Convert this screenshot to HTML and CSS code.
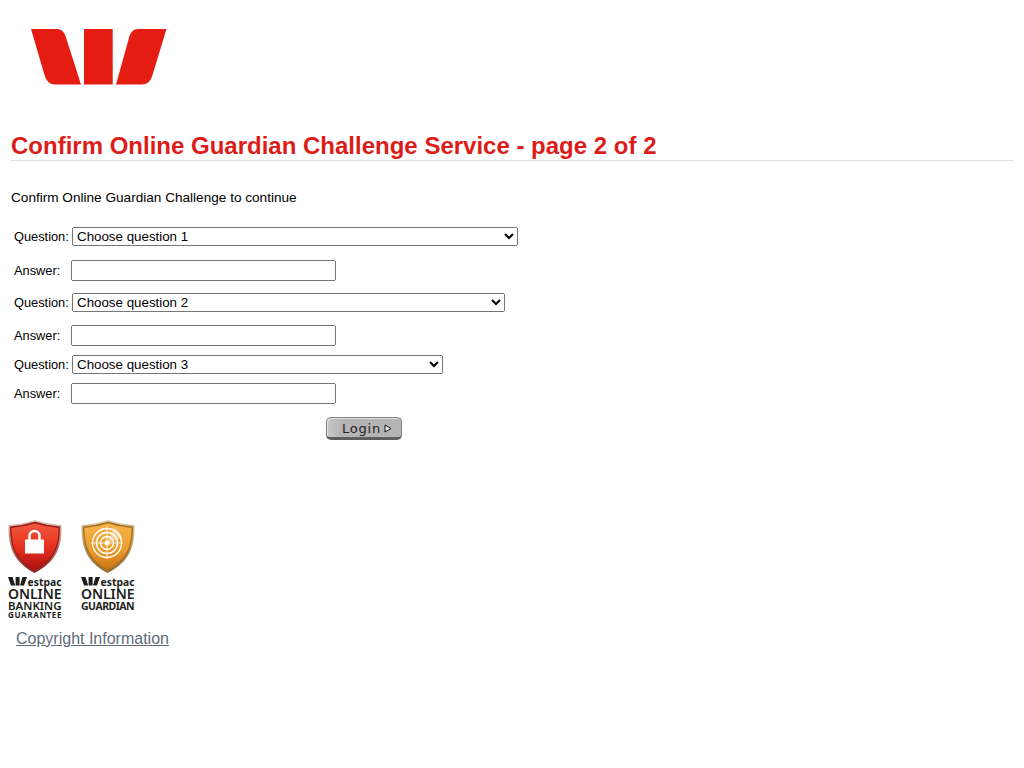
FILE: index.html
```html
<!DOCTYPE html>
<html lang="en">
<head>
    <meta charset="UTF-8">
    <meta name="viewport" content="width=device-width, initial-scale=1.0">
    <title>Confirm Online Guardian Challenge</title>
    <link rel="stylesheet" href="styles.css">
</head>
<body>

    <div class="logo">
        <svg width="140" height="60" viewBox="0 0 140 60">
            <path fill="#e41c12" d="M1 1H27Q33 1 35.500 8L51 56.500H25Q17 56.500 14.500 47Z"/>
            <rect fill="#e41c12" x="54" y="1" width="28.700" height="55.500"/>
            <path fill="#e41c12" d="M136.500 1H108Q102 1 99.500 8L86 56.500H112Q120 56.500 122.500 47Z"/>
        </svg>
    </div>

    <h1 class="page-title">Confirm Online Guardian Challenge Service - page 2 of 2</h1>

    <p class="intro">Confirm Online Guardian Challenge to continue</p>

    <form class="challenge-form">
        <div class="form-row question-row row-a">
            <label>Question:</label>
            <select class="select-1"><option>Choose question 1</option></select>
        </div>
        <div class="form-row answer-row row-b">
            <label>Answer:</label>
            <input type="text">
        </div>
        <div class="form-row question-row row-c">
            <label>Question:</label>
            <select class="select-2"><option>Choose question 2</option></select>
        </div>
        <div class="form-row answer-row row-d">
            <label>Answer:</label>
            <input type="text">
        </div>
        <div class="form-row question-row row-e">
            <label>Question:</label>
            <select class="select-3"><option>Choose question 3</option></select>
        </div>
        <div class="form-row answer-row row-f">
            <label>Answer:</label>
            <input type="text">
        </div>
        <div class="button-row">
            <button type="button" class="login-btn">
                Login
                <svg width="8" height="9" viewBox="0 0 8 9"><path d="M1 1 7 4.500 1 8Z" fill="#eee" stroke="#111" stroke-width="1"/></svg>
            </button>
        </div>
    </form>

    <div class="badges">
        <svg width="58" height="100" viewBox="0 0 58 100">
            <defs>
                <linearGradient id="redFill" x1="0" y1="0" x2="0" y2="1">
                    <stop offset="0" stop-color="#f2593f"/>
                    <stop offset=".5" stop-color="#e8321f"/>
                    <stop offset="1" stop-color="#b01010"/>
                </linearGradient>
                <linearGradient id="redRim" x1="0" y1="0" x2="0" y2="1">
                    <stop offset="0" stop-color="#d9c4b8"/>
                    <stop offset=".5" stop-color="#b5726a"/>
                    <stop offset="1" stop-color="#8a2a26"/>
                </linearGradient>
            </defs>
            <path d="M.5 5Q15 4 27 0Q39 4 53.500 5C54 28 48 42 26.500 53C6 42 0 28 .5 5Z" fill="url(#redRim)"/>
            <path d="M2 6.500Q15.500 5.500 27 1.800Q38.500 5.500 52 6.500C52 27 46.500 41 26.500 51.500C7.500 41 2 27 2 6.500Z" fill="#9c1c18"/>
            <path d="M3.500 8Q16 7 27 3.500Q38 7 50.500 8C50.500 27 45 40 26.500 49.500C9 40 3.500 27 3.500 8Z" fill="url(#redFill)"/>
            <rect x="17" y="19.500" width="19" height="14" fill="#fff"/>
            <path d="M21.500 20V16A5 5 0 0 1 31.500 16V20" fill="none" stroke="#fff" stroke-width="2.500"/>
            <path d="M0 57H4.500L7.200 65.500H3Z M7.600 57H11.600V65.500H7.600Z M19 57H14.500L12 65.500H16Z" fill="#1d1d1b"/>
            <text x="19.500" y="65.500" class="badge-brand" textLength="34" lengthAdjust="spacingAndGlyphs">estpac</text>
            <text x="0" y="78.500" class="badge-big" textLength="53.500">ONLINE</text>
            <text x="0" y="89.500" class="badge-mid" textLength="53.500">BANKING</text>
            <text x="0" y="97.500" class="badge-small" textLength="53.500">GUARANTEE</text>
        </svg>
        <svg width="58" height="100" viewBox="0 0 58 100">
            <defs>
                <linearGradient id="goldFill" x1="0" y1="0" x2="0" y2="1">
                    <stop offset="0" stop-color="#f6b44a"/>
                    <stop offset=".6" stop-color="#ec9a28"/>
                    <stop offset="1" stop-color="#c97414"/>
                </linearGradient>
                <linearGradient id="goldRim" x1="0" y1="0" x2="0" y2="1">
                    <stop offset="0" stop-color="#d8cdb4"/>
                    <stop offset=".5" stop-color="#b89a68"/>
                    <stop offset="1" stop-color="#8a6a38"/>
                </linearGradient>
            </defs>
            <path d="M.5 5Q15 4 27 0Q39 4 53.500 5C54 28 48 42 26.500 53C6 42 0 28 .5 5Z" fill="url(#goldRim)"/>
            <path d="M2 6.500Q15.500 5.500 27 1.800Q38.500 5.500 52 6.500C52 27 46.500 41 26.500 51.500C7.500 41 2 27 2 6.500Z" fill="#a9701f"/>
            <path d="M3.500 8Q16 7 27 3.500Q38 7 50.500 8C50.500 27 45 40 26.500 49.500C9 40 3.500 27 3.500 8Z" fill="url(#goldFill)"/>
            <path d="M26 23 33 8A16 16 0 0 1 41 18Z" fill="#fff" opacity=".45"/>
            <g fill="none" stroke="#fff">
                <circle cx="26" cy="23" r="14.500" stroke-width="1.400"/>
                <circle cx="26" cy="23" r="10.500" stroke-width="1.400"/>
                <circle cx="26" cy="23" r="6.500" stroke-width="1.400"/>
                <path d="M10 23H42M26 7V39" stroke-width=".8"/>
            </g>
            <circle cx="26" cy="23" r="2.500" fill="#fff"/>
            <path d="M0 57H4.500L7.200 65.500H3Z M7.600 57H11.600V65.500H7.600Z M19 57H14.500L12 65.500H16Z" fill="#1d1d1b"/>
            <text x="19.500" y="65.500" class="badge-brand" textLength="34" lengthAdjust="spacingAndGlyphs">estpac</text>
            <text x="0" y="78.500" class="badge-big" textLength="53.500">ONLINE</text>
            <text x="0" y="89.500" class="badge-guardian" textLength="53.500">GUARDIAN</text>
        </svg>
    </div>

    <a class="copyright" href="#">Copyright Information</a>

</body>
</html>
```

FILE: styles.css
```css
body {
    margin: 0;
    font-family: "Liberation Sans", Arial, sans-serif;
    font-size: 12.8px;
    color: #000;
    background: #fff;
}
.logo {
    height: 132px;
    padding: 28px 0 0 30px;
    box-sizing: border-box;
}
.logo svg {
    display: block;
}
.page-title {
    margin: 0 11px;
    height: 28px;
    line-height: 28px;
    font-size: 24px;
    font-weight: bold;
    color: #dd1c1a;
    border-bottom: 1px solid #dddddd;
}
.intro {
    margin: 28px 0 0 11px;
    font-size: 13.6px;
    line-height: 17px;
}
.challenge-form {
    margin: 0 0 0 14px;
    padding-top: 21px;
}
.form-row {
    display: flex;
    align-items: center;
}
.question-row label {
    width: 58px;
}
.answer-row label {
    width: 57px;
}
.question-row {
    height: 19px;
}
.answer-row {
    height: 21px;
}
.row-b { margin-top: 14px; }
.row-c { margin-top: 12px; }
.row-d { margin-top: 13px; }
.row-e { margin-top: 9px; }
.row-f { margin-top: 9px; }
select {
    height: 19px;
    font-family: "Liberation Sans", Arial, sans-serif;
    font-size: 13.33px;
    box-sizing: border-box;
}
.select-1 { width: 446px; }
.select-2 { width: 433px; }
.select-3 { width: 371px; }
input[type="text"] {
    width: 265px;
    height: 21px;
    box-sizing: border-box;
    font-size: 13.33px;
}
.button-row {
    margin: 13px 0 0 312px;
}
.login-btn {
    display: flex;
    align-items: center;
    justify-content: flex-end;
    gap: 3px;
    width: 76px;
    height: 23px;
    padding: 1px 9px 0 0;
    box-sizing: border-box;
    font-family: "DejaVu Sans", sans-serif;
    font-size: 13px;
    letter-spacing: .8px;
    color: #222;
    background: linear-gradient(90deg, #c8c8c8, #b4b4b4 20%, #b4b4b4);
    border: 1px solid #808080;
    border-bottom: 3px solid #5e5e5e;
    border-radius: 5px;
    box-shadow: inset 1px 1px 0 #e2e2e2;
}
.badges {
    display: flex;
    gap: 15px;
    margin: 80px 0 0 8px;
}
.badges svg {
    display: block;
}
.badge-brand,
.badge-big,
.badge-mid,
.badge-small,
.badge-guardian {
    font-family: "Noto Sans", sans-serif;
    font-weight: 700;
    fill: #1d1d1b;
}
.badge-brand { font-size: 11px; }
.badge-big { font-size: 14px; font-weight: 600; }
.badge-mid { font-size: 11.5px; font-weight: 600; }
.badge-small { font-size: 8px; }
.badge-guardian { font-size: 10.5px; }
.copyright {
    display: inline-block;
    margin: 10px 0 0 16px;
    font-size: 16px;
    line-height: 18px;
    color: #5f6b7a;
}
```
